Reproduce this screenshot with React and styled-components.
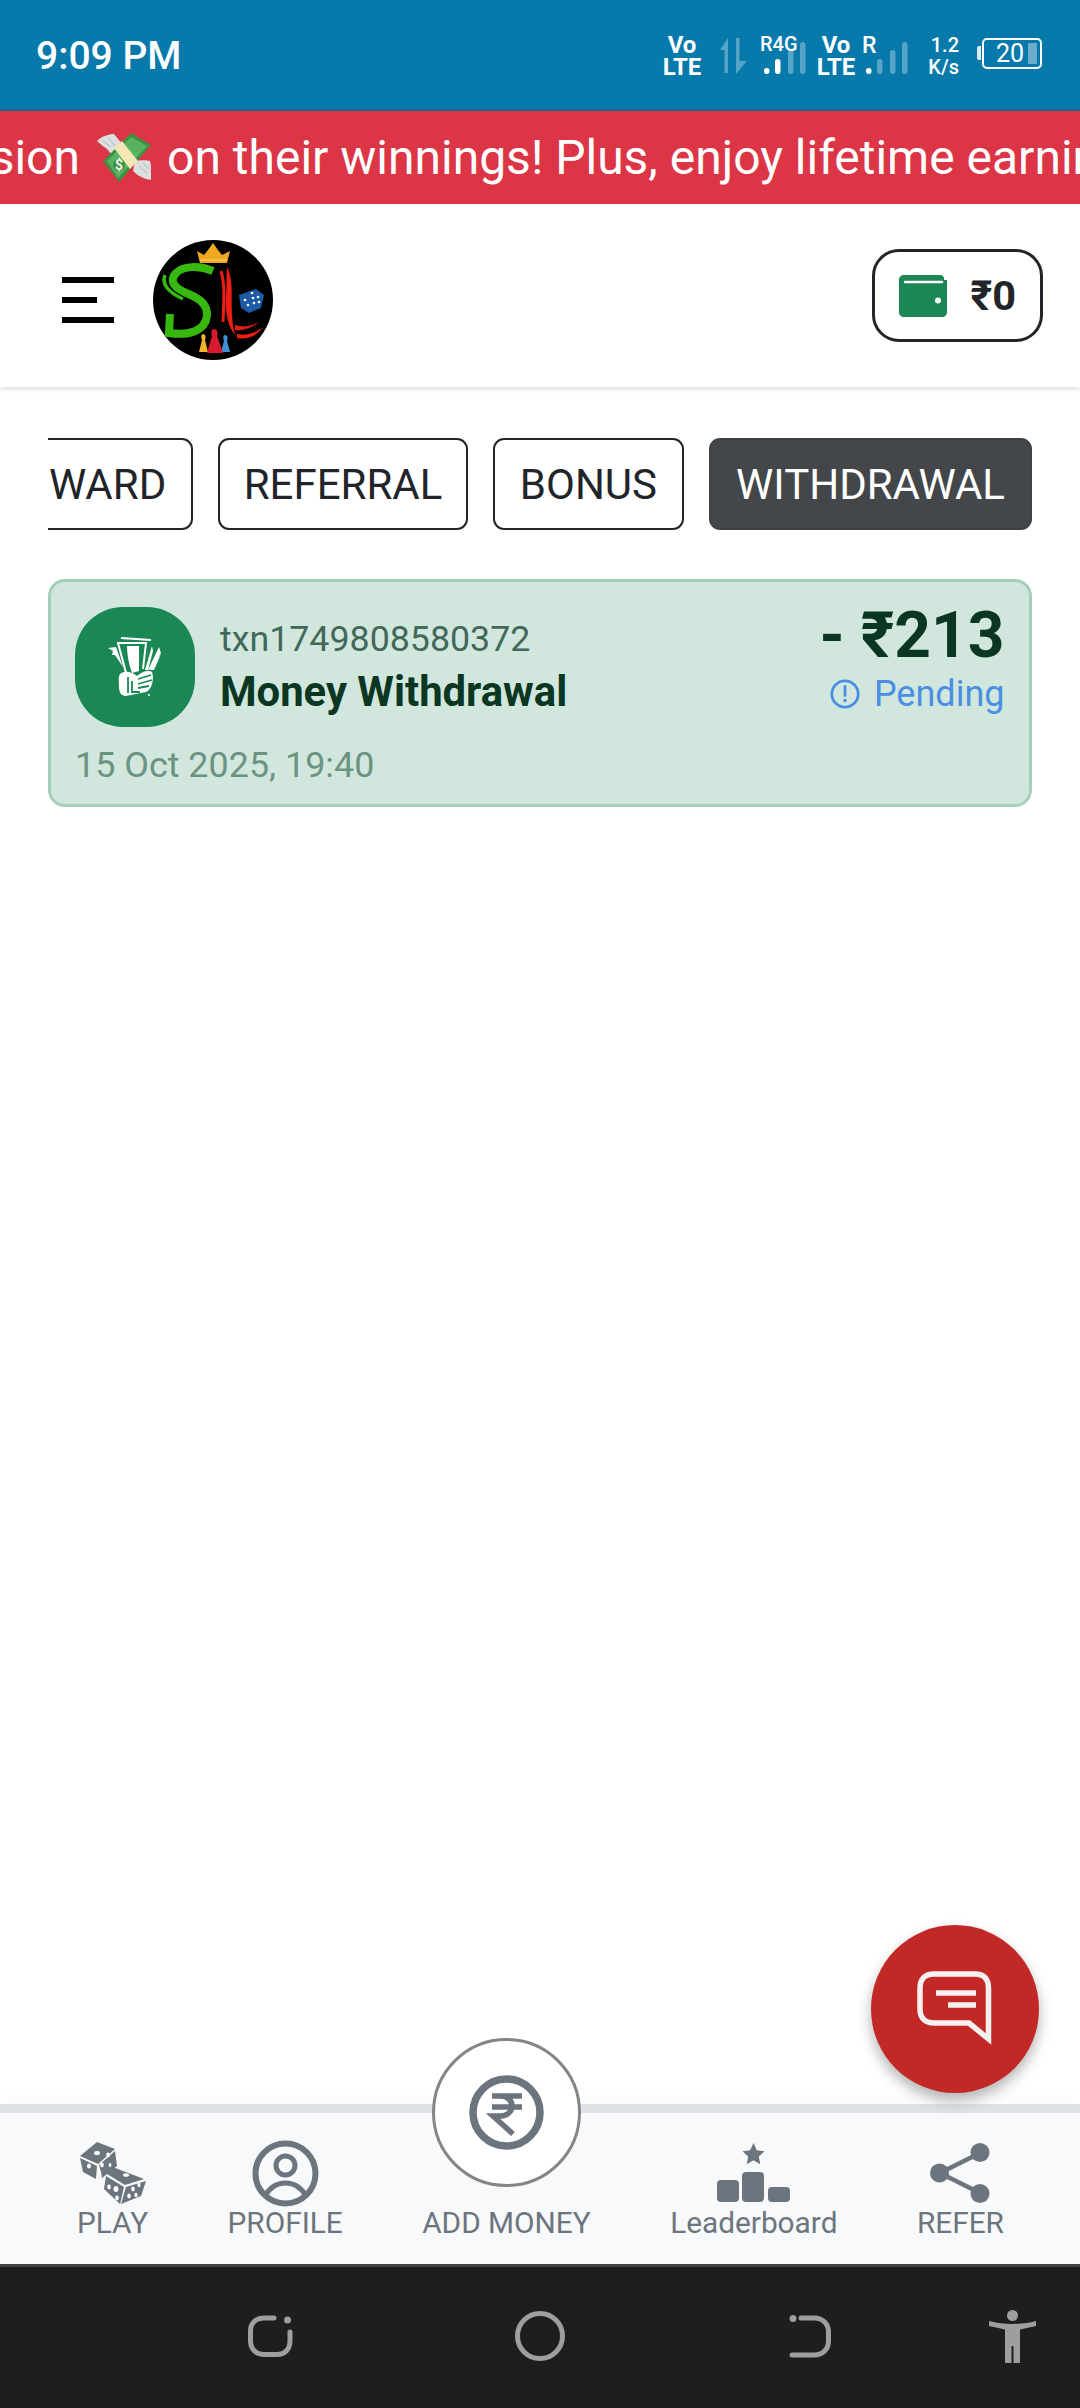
import React from "react";
import styled, { createGlobalStyle } from "styled-components";

const Global = createGlobalStyle`
  html, body { margin: 0; padding: 0; background: #fff; }
  * { box-sizing: border-box; }
  body { font-family: Roboto, "Noto Sans", sans-serif; }
`;

const Page = styled.div`
  position: relative;
  width: 1080px;
  height: 2408px;
  display: flex;
  flex-direction: column;
  overflow: hidden;
  background: #fff;
`;

/* ---------- status bar ---------- */
const StatusBar = styled.div`
  height: 111px;
  flex: none;
  background: #0779ab;
  border-bottom: 2px solid #1a6a8f;
  display: flex;
  align-items: center;
  justify-content: space-between;
  padding: 0 38px 0 36px;
  color: #fff;
`;
const Time = styled.div`
  font-size: 39px;
  font-weight: 500;
  margin-top: 2px;
`;
const StatusIcons = styled.div`
  display: flex;
  align-items: flex-start;
  height: 44px;
  margin-top: 2px;
`;
const Volte = styled.div`
  width: 38px;
  margin-left: ${(p) => p.$ml || 0}px;
  display: flex;
  flex-direction: column;
  align-items: center;
  font-size: 24px;
  font-weight: 700;
  line-height: 22px;
  white-space: nowrap;
`;
const SignalBox = styled.div`
  position: relative;
  margin-left: ${(p) => p.$ml || 0}px;
  width: ${(p) => p.$w}px;
  height: 42px;
`;
const SignalTag = styled.span`
  position: absolute;
  left: ${(p) => p.$l}px;
  top: ${(p) => p.$t}px;
  font-size: ${(p) => p.$fs}px;
  font-weight: 500;
  line-height: 1;
`;
const Speed = styled.div`
  margin-left: ${(p) => p.$ml}px;
  width: 31px;
  display: flex;
  flex-direction: column;
  align-items: flex-end;
  font-size: 20px;
  font-weight: 500;
  line-height: 22px;
  white-space: nowrap;
`;
const Battery = styled.div`
  margin-left: 18px;
  display: flex;
  align-items: center;
  height: 33px;
  margin-top: 3px;
`;
const BatteryNub = styled.div`
  width: 4px;
  height: 14px;
  margin-right: 1px;
  background: rgba(255, 255, 255, 0.85);
  border-radius: 2px 0 0 2px;
`;
const BatteryBody = styled.div`
  width: 60px;
  height: 31px;
  border: 2.5px solid #fff;
  border-radius: 5px;
  display: flex;
  align-items: center;
  padding-left: 12px;
  font-size: 25px;
  line-height: 1;
`;
const BatteryFill = styled.div`
  width: 9px;
  height: 21px;
  margin-left: 4px;
  background: rgba(255, 255, 255, 0.4);
  border-radius: 1px;
`;

/* ---------- ticker ---------- */
const Ticker = styled.div`
  height: 93px;
  flex: none;
  background: #dc3545;
  color: #fff;
  display: flex;
  align-items: center;
  overflow: hidden;
  font-size: 48px;
  white-space: nowrap;
`;
const TickerLead = styled.div`
  flex: 0 0 80px;
  display: flex;
  justify-content: flex-end;
  overflow: hidden;
`;
const TickerEmoji = styled.svg`
  flex: none;
  margin: 0 16px 0 17px;
`;
const TickerRest = styled.div`
  flex: none;
`;

/* ---------- header ---------- */
const Header = styled.header`
  height: 183px;
  flex: none;
  background: #fff;
  display: flex;
  align-items: center;
  justify-content: space-between;
  padding: 0 37px 0 62px;
  box-shadow: 0 2px 5px rgba(0, 0, 0, 0.15);
  position: relative;
`;
const HeaderLeft = styled.div`
  display: flex;
  align-items: center;
  gap: 39px;
  margin-top: 9px;
`;
const Burger = styled.div`
  width: 52px;
  display: flex;
  flex-direction: column;
  gap: 14px;
`;
const BurgerBar = styled.div`
  height: 6px;
  width: ${(p) => p.$w}px;
  background: #000;
`;
const WalletButton = styled.div`
  width: 171px;
  height: 93px;
  border: 3.5px solid #212529;
  border-radius: 27px;
  display: flex;
  align-items: center;
  padding-left: 23.5px;
  gap: 24px;
  font-size: 41.5px;
  font-weight: 700;
  color: #212529;
`;

/* ---------- tabs ---------- */
const Tabs = styled.div`
  margin: 51px 48px 0;
  display: flex;
  justify-content: flex-end;
  gap: 25px;
  overflow: hidden;
  flex: none;
`;
const Tab = styled.div`
  flex: none;
  height: 92px;
  padding: 0 ${(p) => p.$pad || 25}px;
  border: 2.75px solid ${(p) => (p.$active ? "#3e4246" : "#212529")};
  border-radius: 11px;
  background: ${(p) => (p.$active ? "#43474a" : "#fff")};
  color: ${(p) => (p.$active ? "#fff" : "#212529")};
  display: flex;
  align-items: center;
  font-size: 42px;
`;

/* ---------- transaction card ---------- */
const Card = styled.div`
  margin: 49px 48px 0;
  height: 228px;
  flex: none;
  background: #d1e7dd;
  border: 3px solid #a6cfbb;
  border-radius: 17px;
  padding: 24.5px 24.5px 18.5px 24px;
  display: flex;
  flex-direction: column;
`;
const CardTop = styled.div`
  display: flex;
  justify-content: space-between;
`;
const CardLeft = styled.div`
  display: flex;
  align-items: center;
  gap: 25px;
`;
const TxIcon = styled.div`
  width: 120px;
  height: 120px;
  border-radius: 48px;
  background: #1b8754;
  display: flex;
  align-items: center;
  justify-content: center;
`;
const TxTexts = styled.div`
  display: flex;
  flex-direction: column;
  gap: 8px;
`;
const TxId = styled.div`
  font-size: 35.75px;
  line-height: 42px;
  color: #42685a;
`;
const TxTitle = styled.div`
  font-size: 41.8px;
  line-height: 48px;
  font-weight: 700;
  color: #0a3622;
`;
const CardRight = styled.div`
  display: flex;
  flex-direction: column;
  align-items: flex-end;
  gap: 8.5px;
`;
const Amount = styled.div`
  font-size: 64px;
  line-height: 58px;
  font-weight: 700;
  color: #0a3622;
`;
const Status = styled.div`
  display: flex;
  align-items: center;
  gap: 14px;
  font-size: 36px;
  line-height: 42px;
  color: #4a8fe3;
`;
const TxDate = styled.div`
  margin-top: 17px;
  font-size: 35.9px;
  line-height: 42px;
  color: #6b9381;
`;

const Spacer = styled.div`
  flex: 1;
`;

/* ---------- floating chat ---------- */
const Fab = styled.div`
  position: absolute;
  right: 41px;
  bottom: 315px;
  width: 168px;
  height: 168px;
  border-radius: 50%;
  background: #c22926;
  box-shadow: 0 7px 14px rgba(0, 0, 0, 0.3);
  display: flex;
  align-items: center;
  justify-content: center;
`;

/* ---------- bottom nav ---------- */
const BottomNav = styled.nav`
  height: 160px;
  flex: none;
  background: #f8f9fa;
  border-top: 9px solid #dee2e6;
  box-shadow: 0 -8px 18px rgba(0, 0, 0, 0.02);
  display: flex;
  align-items: flex-end;
  justify-content: space-between;
  padding: 0 76px 24px 77px;
`;
const NavItem = styled.div`
  display: flex;
  flex-direction: column;
  align-items: center;
  color: #6c757d;
`;
const NavIcon = styled.div`
  height: 66px;
  display: flex;
  align-items: center;
  justify-content: center;
`;
const AddCircle = styled.div`
  width: 149px;
  height: 149px;
  margin-bottom: 19px;
  border-radius: 50%;
  border: 3px solid #858585;
  background: #fff;
  display: flex;
  align-items: center;
  justify-content: center;
`;
const NavLabel = styled.div`
  font-size: 29.8px;
  line-height: 34px;
  white-space: nowrap;
`;

/* ---------- system nav ---------- */
const SystemNav = styled.div`
  height: 144px;
  flex: none;
  background: #1e1e1e;
  border-top: 3px solid #404244;
  display: grid;
  grid-template-columns: 270px 270px 270px 135px;
  padding-left: 135px;
  padding-bottom: 3px;
  align-items: center;
  justify-items: center;
`;

const MoneyWings = () => (
  <TickerEmoji width="54" height="50" viewBox="0 0 54 50">
    <path d="M0 8 C5 3 12 1 17 1 L26 12 L18 22 C14 22 12 18 10 16 C7 14 3 11 0 8Z" fill="#dcdfdf" />
    <path d="M6 8 L14 14 M11 5 L18 13" stroke="#b4b8b8" strokeWidth="1" />
    <path d="M54 47 C47 46 41 43 36 38 L38 28 C44 27 50 27 53 28 C55 34 54 41 54 47Z" fill="#dcdfdf" />
    <path d="M42 33 L50 40 M46 30 L52 36" stroke="#b4b8b8" strokeWidth="1" />
    <path d="M34 0 L54 12 L22 49 L6 28Z" fill="#3d9142" />
    <path d="M34 4 L50 13 L21 45 L10 28Z" fill="#58b25f" />
    <path d="M17 15 L25 8 L41 28 L33 36Z" fill="#f3e7b6" />
    <circle cx="22" cy="32" r="6" fill="#3d9142" />
    <text x="18" y="37" fontSize="14" fontWeight="700" fill="#eef8ee" fontFamily="Roboto, sans-serif">$</text>
  </TickerEmoji>
);

const Logo = () => (
  <svg width="120" height="120" viewBox="0 0 120 120">
    <circle cx="60" cy="60" r="60" fill="#000" />
    <path d="M47 23 L44 11 L51 15 L55 10 L60 3 L65 10 L69 15 L77 11 L74 23 Z" fill="#f0a820" />
    <path d="M47 20 H74" stroke="#ffd770" strokeWidth="1" />
    <g fill="none" stroke="#37b80f" strokeLinecap="butt">
      <path d="M60 31 C46 25 30 26 23 33 C16 41 21 47 31 52 C43 57 55 62 54 76 C52 91 36 96 16 93 L17 74" strokeWidth="8" />
      <path d="M12 35 C8 45 17 53 30 59" strokeWidth="3.5" />
    </g>
    <path d="M68 31 C72 44 71 60 70 82" stroke="#ee1c13" strokeWidth="3" fill="none" />
    <path d="M74 27 C83 44 75 68 82 94 C76 90 71 70 73 56 C74 44 73 36 74 27Z" fill="#ee1c13" />
    <path d="M82 85 C90 88 98 86 106 82 C99 88 90 91 82 90Z" fill="#ee1c13" />
    <path d="M84 94 C93 96 103 93 110 87 C104 96 94 100 84 98Z" fill="#ee1c13" />
    <path d="M86 55 L103 49 L111 55 L108 68 L96 73 L88 68Z" fill="#1d5ba6" />
    <g fill="#fff">
      <circle cx="92" cy="60" r="1.3" />
      <circle cx="95" cy="65" r="1.3" />
      <circle cx="100" cy="58" r="1.3" />
      <circle cx="101" cy="63" r="1.3" />
      <circle cx="105" cy="57" r="1.3" />
      <circle cx="106" cy="62" r="1.3" />
      <circle cx="99" cy="53" r="1.3" />
    </g>
    <path d="M50 94 C53 94 53 98 52 100 L55 112 H46 L49 100 C48 98 48 94 50 94Z" fill="#f0b429" />
    <path d="M72 95 C75 95 75 99 74 101 L77 112 H68 L71 101 C70 99 70 95 72 95Z" fill="#3f8fd6" />
    <path d="M61 89 C65 89 65 94 64 96 L70 113 H54 L59 96 C58 94 58 89 61 89Z" fill="#d8192f" />
  </svg>
);

const WalletIcon = () => (
  <svg width="48" height="42" viewBox="0 0 48 42">
    <path
      d="M5 0 H41 C44 0 45 2 45 3.5 V5 H48 V37 C48 40 46 42 43 42 H5 C2 42 0 40 0 37 V5 C0 2 2 0 5 0Z"
      fill="#1b8754"
    />
    <path d="M6 7 H43" stroke="#fff" strokeWidth="2.5" strokeLinecap="round" />
    <circle cx="39" cy="25.5" r="3" fill="#fff" />
  </svg>
);

const CashIcon = () => (
  <svg width="54" height="60" viewBox="0 0 54 60">
    <g fill="none" stroke="#fff" strokeWidth="2">
      <path d="M13 1 L43 3" />
      <path d="M9 6 L38 6 L35 32" />
      <path d="M10 6 L18 36" />
    </g>
    <path d="M19 9 L31 9 L31 34 L24 36 C21 28 19 18 19 9Z" fill="#fff" />
    <path d="M0 11 L8 10 L15 30 L7 18 L4 18 L5 14Z" fill="#fff" />
    <path d="M37 33 L44 9 L45 14 L40 33Z" fill="#fff" />
    <path d="M40 33 L51 10 L53 16 L44 32Z" fill="#fff" />
    <path d="M42 33 L53 17 L46 33Z" fill="#fff" />
    <path
      d="M12 37 C17 33 24 35 29 39 C34 35 40 32 44 35 C46 40 45 52 38 55 L18 59 C13 59 11 55 11 50 C11 45 10 40 12 37Z"
      fill="#fff"
    />
    <g stroke="#1b8754" strokeWidth="1.8" fill="none">
      <path d="M20 40 V56" />
      <path d="M24 44 V55 H32" />
      <path d="M30 42 L43 38" />
      <path d="M30 47 L44 43" />
      <path d="M30 51 L41 49" />
    </g>
    <circle cx="41" cy="58" r="1" fill="#fff" />
  </svg>
);

const PendingIcon = () => (
  <svg width="30" height="30" viewBox="0 0 30 30">
    <circle cx="15" cy="15" r="13.2" fill="none" stroke="#4a8fe3" strokeWidth="2.8" />
    <path d="M15 7.5 V16.5" stroke="#4a8fe3" strokeWidth="2.8" strokeLinecap="round" />
    <circle cx="15" cy="21.5" r="1.8" fill="#4a8fe3" />
  </svg>
);

const ChatIcon = () => (
  <svg width="76" height="76" viewBox="0 0 76 76">
    <path
      d="M17 3 H58 C67 3 71.5 8 71.5 17 V68 L52 52 H17 C8 52 3 47 3 38 V17 C3 8 8 3 17 3Z"
      fill="none"
      stroke="#f5f1f1"
      strokeWidth="5.5"
    />
    <path d="M19 22 H59 M31 34 H59" stroke="#f5f1f1" strokeWidth="5.5" />
  </svg>
);

const DiceIcon = () => (
  <svg width="66" height="62" viewBox="0 0 66 62">
    <g fill="#6c757d">
      <path d="M0 14 L17 0 L35 7 L18 22Z" />
      <path d="M0 16 L17 24 L16 37 L3 30Z" />
      <path d="M19 23 L35 9 L37 24 L22 36 L21 30Z" />
      <path d="M30 24 L64 37 L45 43 L27 32Z" />
      <path d="M26 34 L44 45 L40 62 L24 47Z" />
      <path d="M46 45 L66 39 L61 54 L41 62Z" />
    </g>
    <g fill="#fff">
      <ellipse cx="17" cy="11" rx="3" ry="2" />
      <ellipse cx="9" cy="24" rx="2" ry="2.6" />
      <ellipse cx="22" cy="23" rx="1.8" ry="2.4" />
      <ellipse cx="28" cy="13" rx="1.8" ry="2.4" />
      <ellipse cx="30" cy="23" rx="1.4" ry="2" />
      <ellipse cx="46" cy="33" rx="3" ry="1.8" />
      <ellipse cx="29" cy="45" rx="1.8" ry="2.4" />
      <ellipse cx="36" cy="47" rx="2.4" ry="3" />
      <ellipse cx="37" cy="56" rx="1.8" ry="2.4" />
      <ellipse cx="49" cy="54" rx="1.8" ry="2.4" />
      <ellipse cx="53" cy="47" rx="1.8" ry="2.4" />
      <ellipse cx="59" cy="43" rx="1.6" ry="2.2" />
      <ellipse cx="56" cy="53" rx="1.6" ry="2.2" />
    </g>
  </svg>
);

const ProfileIcon = () => (
  <svg width="67" height="67" viewBox="0 0 67 67">
    <g fill="none" stroke="#6c757d">
      <circle cx="33.5" cy="33.5" r="30" strokeWidth="6" />
      <circle cx="33.5" cy="25.5" r="9.5" strokeWidth="5" />
      <path d="M13 56 C18 47 25 43 33.5 43 C42 43 49 47 54 56" strokeWidth="5" />
    </g>
  </svg>
);

const RupeeRing = () => (
  <svg width="75" height="75" viewBox="0 0 75 75">
    <circle cx="37.5" cy="37.5" r="33.5" fill="none" stroke="#6c757d" strokeWidth="7.5" />
    <path
      d="M23 21 H53 M23 32 H53 M31 21 C39 21 43 26 43 31 C43 37 38 41 31 41 H24 L44 59"
      fill="none"
      stroke="#6c757d"
      strokeWidth="5.5"
    />
  </svg>
);

const LeaderIcon = () => (
  <svg width="73" height="60" viewBox="0 0 73 60">
    <g fill="#6c757d">
      <path d="M36.5 0 L39.8 7.3 L47.5 8.2 L41.8 13.5 L43.3 21.2 L36.5 17.3 L29.7 21.2 L31.2 13.5 L25.5 8.2 L33.2 7.3Z" />
      <rect x="0" y="37" width="22" height="22" rx="4" />
      <rect x="25" y="29" width="22" height="30" rx="4" />
      <rect x="51" y="44" width="22" height="15" rx="4" />
    </g>
  </svg>
);

const ShareIcon = () => (
  <svg width="60" height="60" viewBox="0 0 60 60">
    <path d="M50 10 L10 30 L50 50" fill="none" stroke="#6c757d" strokeWidth="4.5" />
    <g fill="#6c757d">
      <circle cx="50" cy="9.5" r="9.5" />
      <circle cx="9.5" cy="30" r="9.5" />
      <circle cx="50" cy="50.5" r="9.5" />
    </g>
  </svg>
);

const RecentsIcon = () => (
  <svg width="45" height="42" viewBox="0 0 45 42">
    <path
      d="M26 3 H16 C8 3 2.5 8 2.5 16 V26 C2.5 34 8 39.5 16 39.5 H29 C37 39.5 42 34 42 26 V17"
      fill="none"
      stroke="#9e9e9e"
      strokeWidth="5"
      strokeLinecap="round"
    />
    <circle cx="39.5" cy="5" r="3.5" fill="#9e9e9e" />
  </svg>
);

const HomeIcon = () => (
  <svg width="50" height="50" viewBox="0 0 50 50">
    <circle cx="25" cy="25" r="22.5" fill="none" stroke="#9e9e9e" strokeWidth="5" />
  </svg>
);

const BackIcon = () => (
  <svg width="42" height="43" viewBox="0 0 42 43">
    <path
      d="M12 3 H25 C34 3 39.5 9 39.5 17 V26 C39.5 34 34 40 25 40 H3"
      fill="none"
      stroke="#9e9e9e"
      strokeWidth="5"
      strokeLinecap="round"
    />
    <circle cx="4" cy="3.5" r="3.5" fill="#9e9e9e" />
  </svg>
);

const AccessIcon = () => (
  <svg width="47" height="53" viewBox="0 0 47 53">
    <circle cx="23.5" cy="5.5" r="5.5" fill="#9e9e9e" />
    <path
      d="M0 11 C15 15 32 15 47 11 L47 16 L31 19.5 V53 H24.5 V36 H22.5 V53 H16 V19.5 L0 16Z"
      fill="#9e9e9e"
    />
  </svg>
);

const ArrowsIcon = () => (
  <svg width="27" height="36" viewBox="0 0 27 36" style={{ marginLeft: 19, marginTop: 4 }}>
    <g fill="rgba(255,255,255,0.32)">
      <path d="M8 0 V35 H4.5 V12 H0Z" />
      <path d="M16 0 H19.5 V23 H27 L16 36Z" />
    </g>
  </svg>
);

const Bars = ({ active }) => {
  const bars = [
    { x: 4, h: 6 },
    { x: 15, h: 15 },
    { x: 28, h: 24 },
    { x: 40, h: 32 },
  ];
  return (
    <svg width="46" height="42" viewBox="0 0 46 42" style={{ position: "absolute", left: 0, top: 0 }}>
      {bars.map((b, i) => (
        <rect
          key={b.x}
          x={b.x}
          y={40 - b.h}
          width="5.5"
          height={b.h}
          rx="2.7"
          fill={i < active ? "#fff" : "rgba(255,255,255,0.32)"}
        />
      ))}
    </svg>
  );
};

export default function App() {
  return (
    <Page>
      <Global />
      <StatusBar>
        <Time>9:09 PM</Time>
        <StatusIcons>
          <Volte>
            <span>Vo</span>
            <span>LTE</span>
          </Volte>
          <ArrowsIcon />
          <SignalBox $ml={13} $w={46}>
            <Bars active={2} />
            <SignalTag $l={0} $t={0} $fs={20}>R4G</SignalTag>
          </SignalBox>
          <Volte $ml={11}>
            <span>Vo</span>
            <span>LTE</span>
          </Volte>
          <SignalBox $ml={7} $w={46}>
            <Bars active={1} />
            <SignalTag $l={0} $t={0} $fs={23}>R</SignalTag>
          </SignalBox>
          <Speed $ml={20}>
            <span>1.2</span>
            <span>K/s</span>
          </Speed>
          <Battery>
            <BatteryNub />
            <BatteryBody>
              20
              <BatteryFill />
            </BatteryBody>
          </Battery>
        </StatusIcons>
      </StatusBar>

      <Ticker>
        <TickerLead>
          <span>commission</span>
        </TickerLead>
        <MoneyWings />
        <TickerRest>on their winnings! Plus, enjoy lifetime earnings</TickerRest>
      </Ticker>

      <Header>
        <HeaderLeft>
          <Burger>
            <BurgerBar $w={52} />
            <BurgerBar $w={35} />
            <BurgerBar $w={52} />
          </Burger>
          <Logo />
        </HeaderLeft>
        <WalletButton>
          <WalletIcon />
          <span>₹0</span>
        </WalletButton>
      </Header>

      <Tabs>
        <Tab $pad={25}>REWARD</Tab>
        <Tab $pad={23.5}>REFERRAL</Tab>
        <Tab $pad={25}>BONUS</Tab>
        <Tab $pad={25} $active>WITHDRAWAL</Tab>
      </Tabs>

      <Card>
        <CardTop>
          <CardLeft>
            <TxIcon>
              <CashIcon />
            </TxIcon>
            <TxTexts>
              <TxId>txn1749808580372</TxId>
              <TxTitle>Money Withdrawal</TxTitle>
            </TxTexts>
          </CardLeft>
          <CardRight>
            <Amount>- ₹213</Amount>
            <Status>
              <PendingIcon />
              Pending
            </Status>
          </CardRight>
        </CardTop>
        <TxDate>15 Oct 2025, 19:40</TxDate>
      </Card>

      <Spacer />

      <Fab>
        <ChatIcon />
      </Fab>

      <BottomNav>
        <NavItem>
          <NavIcon><DiceIcon /></NavIcon>
          <NavLabel>PLAY</NavLabel>
        </NavItem>
        <NavItem>
          <NavIcon><ProfileIcon /></NavIcon>
          <NavLabel>PROFILE</NavLabel>
        </NavItem>
        <NavItem>
          <AddCircle><RupeeRing /></AddCircle>
          <NavLabel>ADD MONEY</NavLabel>
        </NavItem>
        <NavItem>
          <NavIcon><LeaderIcon /></NavIcon>
          <NavLabel>Leaderboard</NavLabel>
        </NavItem>
        <NavItem>
          <NavIcon><ShareIcon /></NavIcon>
          <NavLabel>REFER</NavLabel>
        </NavItem>
      </BottomNav>

      <SystemNav>
        <RecentsIcon />
        <HomeIcon />
        <BackIcon />
        <AccessIcon />
      </SystemNav>
    </Page>
  );
}
